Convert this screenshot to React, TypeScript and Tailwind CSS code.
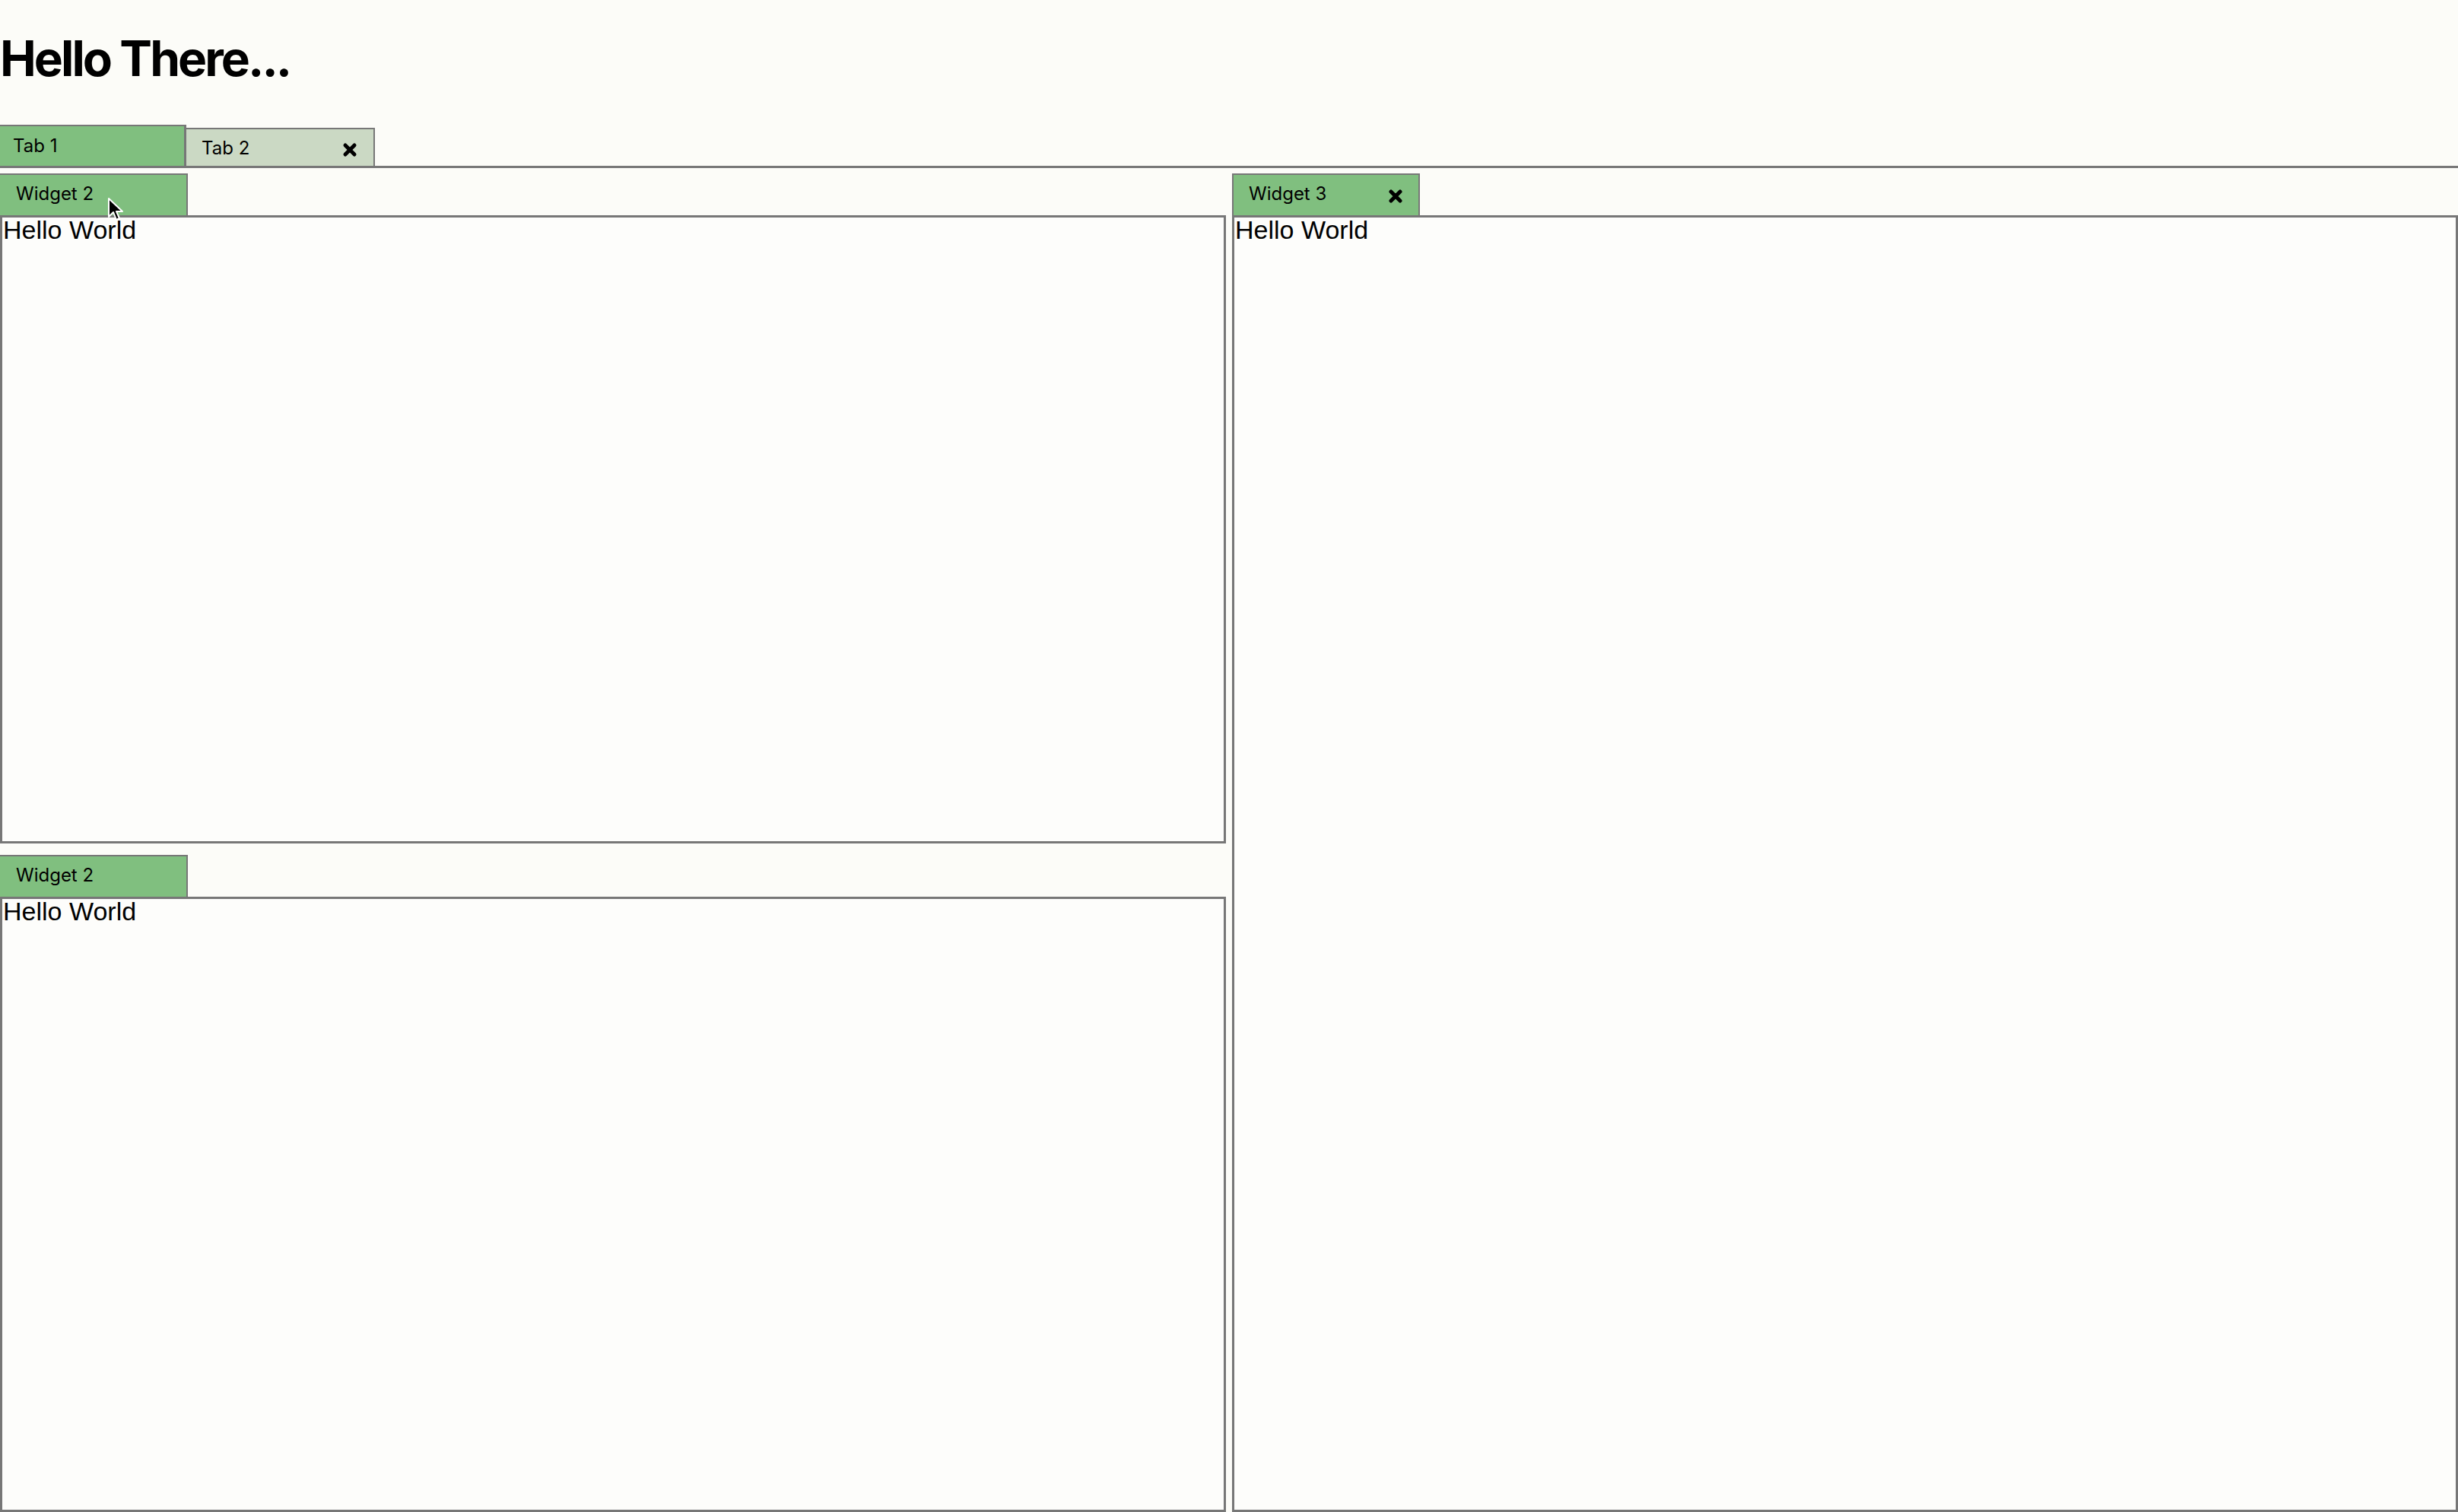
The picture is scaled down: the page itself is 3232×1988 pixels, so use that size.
import React from 'react'

const sans = { fontFamily: 'Inter, "Noto Sans", sans-serif' }
const body = { fontFamily: '"Liberation Sans", Arial, sans-serif' }

function CloseIcon() {
  return (
    <svg width="20" height="20" viewBox="0 0 20 20" className="shrink-0 mt-[6px]">
      <path d="M4 4 L16 16 M16 4 L4 16" stroke="#000" strokeWidth="5" strokeLinecap="round" />
    </svg>
  )
}

function Cursor() {
  return (
    <svg width="24" height="34" viewBox="0 0 24 34" className="absolute left-[141px] top-[259px] pointer-events-none">
      <path
        d="M2 2 L2 26 L8 20 L12 30 L16 28 L12 19 L20 19 Z"
        fill="#000"
        stroke="#fff"
        strokeWidth="2"
        strokeLinejoin="round"
      />
    </svg>
  )
}

interface WidgetProps {
  title: string
  closable?: boolean
  edge?: boolean
  className?: string
}

function Widget({ title, closable = false, edge = false, className = '' }: WidgetProps) {
  return (
    <div className={`flex flex-col ${className}`}>
      {/* Tab */}
      <div
        className={`flex items-center justify-between w-[247px] h-[55px] pb-[3px] pr-[20px] bg-[#80bf7f] border-t-2 border-r-2 border-[#777] text-[24px] text-black ${
          edge ? 'pl-[21px]' : 'border-l-2 pl-[20px]'
        }`}
        style={sans}
      >
        <span>{title}</span>
        {closable && <CloseIcon />}
      </div>
      {/* Panel */}
      <div
        className="flex-1 border-[3px] border-[#777] bg-[#fdfdfb] px-px pt-[1px] text-[34px] leading-[30px] text-black"
        style={body}
      >
        Hello World
      </div>
    </div>
  )
}

export default function App() {
  return (
    <div className="relative flex flex-col w-full h-[1988px] overflow-hidden bg-[#fcfcf8]">
      <h1 className="pt-[45px] text-[64px] leading-[64px] font-bold tracking-[-0.046em] text-black" style={sans}>
        Hello There...
      </h1>

      {/* Tab bar */}
      <div className="flex items-end mt-[55px] h-[57px] border-b-[3px] border-[#777] text-[24px] text-black" style={sans}>
        <div className="flex items-center w-[245px] h-[54px] pl-[17px] bg-[#80bf7f] border-t-2 border-r-[3px] border-[#777]">
          Tab 1
        </div>
        <div className="flex items-center justify-between w-[248px] h-[50px] pl-[20px] pr-[21px] bg-[#cbd9c4] border-t-2 border-r-2 border-[#777]">
          <span className="pt-[2px]">Tab 2</span>
          <CloseIcon />
        </div>
      </div>

      {/* Widgets */}
      <div className="flex flex-1 gap-[8px] pt-[7px]">
        <div className="flex flex-col w-[1612px] gap-[15px]">
          <Widget title="Widget 2" edge className="h-[881px]" />
          <Widget title="Widget 2" edge className="flex-1" />
        </div>
        <div className="flex flex-col flex-1">
          <Widget title="Widget 3" closable className="flex-1" />
        </div>
      </div>

      <Cursor />
    </div>
  )
}
